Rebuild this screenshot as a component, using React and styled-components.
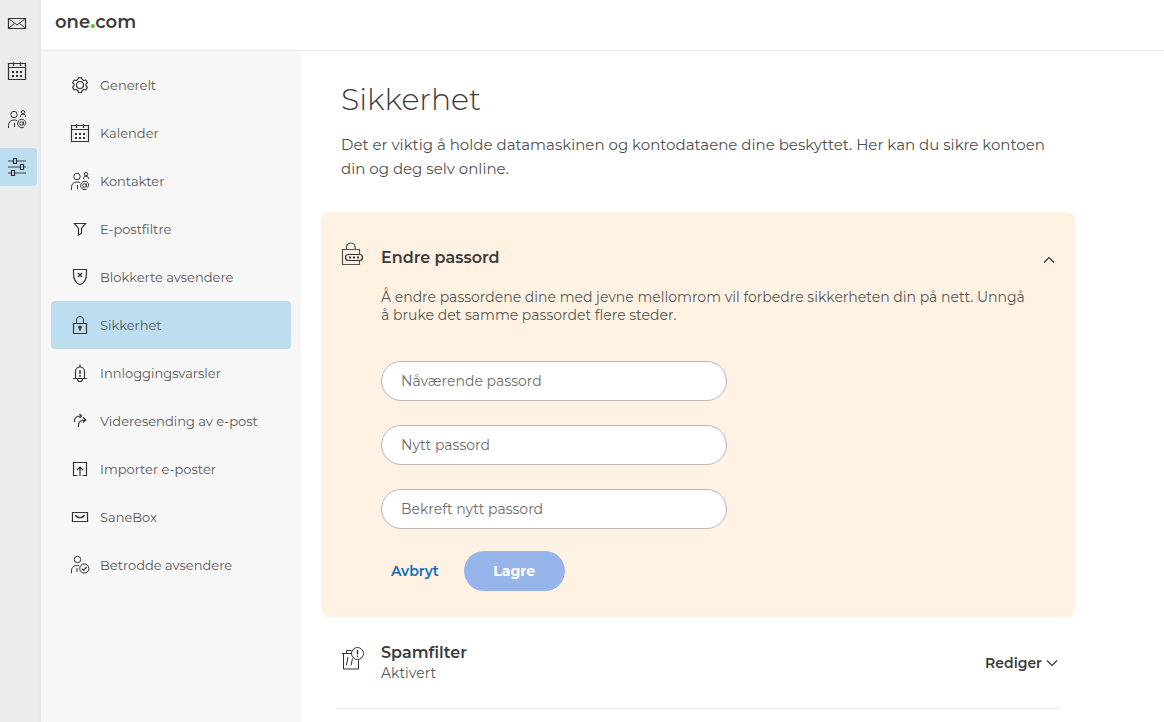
import React from "react";
import styled, { createGlobalStyle } from "styled-components";

const GlobalStyle = createGlobalStyle`
  *, *::before, *::after { box-sizing: border-box; }
  body {
    margin: 0;
    background: #fff;
    color: #3c3c3c;
    font-family: Montserrat, Inter, "Open Sans", sans-serif;
    font-weight: 400;
  }
  h1, h2, p, ul { margin: 0; padding: 0; }
  button, input { font: inherit; color: inherit; }
`;

const Page = styled.div`
  display: flex;
  min-height: 100vh;
`;

const Rail = styled.nav`
  flex: 0 0 41px;
  display: flex;
  flex-direction: column;
  gap: 10px;
  padding: 4px 4px 0 0;
  background: linear-gradient(to right, #ececec 36px, #e8e8e8);
`;

const RailLink = styled.a`
  display: flex;
  align-items: center;
  height: 38px;
  padding-left: 5px;
  border-radius: 0 4px 4px 0;
  color: #333;
  background: ${(p) => (p.$active ? "#bdddf1" : "transparent")};
`;

const Column = styled.div`
  flex: 1;
  min-width: 0;
  display: flex;
  flex-direction: column;
`;

const Header = styled.header`
  height: 51px;
  padding: 10px 14px;
  border-bottom: 1px solid #e9e9e9;
`;

const Logo = styled.a`
  color: #3c3c3c;
  font-size: 18px;
  line-height: 24px;
  font-weight: 600;
  text-decoration: none;
`;

const LogoDot = styled.span`
  color: #76b82a;
  font-weight: 800;
`;

const Body = styled.div`
  flex: 1;
  display: flex;
`;

const Sidebar = styled.nav`
  flex: 0 0 260px;
  padding: 10px;
  background: #f7f7f7;
`;

const NavList = styled.ul`
  list-style: none;
`;

const NavLink = styled.a`
  display: flex;
  align-items: center;
  gap: 8px;
  height: 48px;
  padding-left: 17px;
  border-radius: 4px;
  color: #585858;
  font-size: 13px;
  text-decoration: none;
  background: ${(p) => (p.$active ? "#bdddf1" : "transparent")};
`;

const Main = styled.main`
  flex: 1;
  min-width: 0;
  padding: 29px 20px 0;
`;

const Content = styled.div`
  max-width: 754px;
`;

const Intro = styled.header`
  padding: 0 20px 31px;
`;

const Title = styled.h1`
  margin-bottom: 13px;
  font-size: 30px;
  line-height: 40px;
  font-weight: 300;
`;

const Lead = styled.p`
  color: #505050;
  font-size: 15px;
  line-height: 24px;
`;

const Card = styled.section`
  display: grid;
  grid-template-columns: 24px 1fr 12px;
  column-gap: 16px;
  padding: 30px 20px 26px;
  border-radius: 8px;
  background: #fff2e3;
`;

const CardTitle = styled.h2`
  font-size: 16px;
  line-height: 20px;
  font-weight: 600;
`;

const CardHead = styled.div`
  padding-top: 6px;
`;

const IconButton = styled.button`
  display: flex;
  align-items: center;
  justify-content: center;
  height: 36px;
  padding: 0;
  border: 0;
  background: none;
  cursor: pointer;
`;

const CardBody = styled.div`
  grid-column: 2 / 4;
  padding-top: 10px;
`;

const CardText = styled.p`
  max-width: 652px;
  margin-bottom: 37px;
  color: #585858;
  font-size: 14px;
  line-height: 18px;
`;

const Form = styled.form`
  display: flex;
  flex-direction: column;
  align-items: flex-start;
  gap: 24px;
`;

const Field = styled.input`
  width: 100%;
  max-width: 346px;
  height: 40px;
  padding: 0 19px;
  border: 1px solid #b9b9b9;
  border-radius: 20px;
  background: #fff;
  font-size: 14px;
  &::placeholder {
    color: #6e6e6e;
    opacity: 1;
  }
`;

const Actions = styled.div`
  display: flex;
  gap: 15px;
  margin-top: -2px;
`;

const TextButton = styled.button`
  height: 40px;
  padding: 0 10px;
  border: 0;
  background: none;
  color: #0f6cc0;
  font-size: 14px;
  font-weight: 600;
`;

const PrimaryButton = styled.button`
  min-width: 101px;
  height: 40px;
  padding: 0 28px;
  border: 0;
  border-radius: 20px;
  background: #97b5ea;
  color: #fff;
  font-size: 14px;
  font-weight: 700;
`;

const Row = styled.section`
  display: flex;
  gap: 16px;
  margin: 0 15px;
  padding: 26px 2px 24px 5px;
  border-bottom: 1px solid #e9e9e9;
`;

const RowIcon = styled.div`
  padding-top: 4px;
`;

const RowText = styled.div`
  flex: 1;
`;

const RowStatus = styled.p`
  color: #585858;
  font-size: 14px;
  line-height: 21px;
`;

const EditButton = styled.button`
  display: flex;
  align-items: center;
  gap: 4px;
  height: 40px;
  padding: 0;
  border: 0;
  background: none;
  font-size: 14px;
  font-weight: 600;
  cursor: pointer;
`;

const Glyph = styled.svg`
  display: block;
  flex: none;
  fill: none;
  stroke: #333;
  stroke-width: ${(p) => (p.$fine ? 1 : 1.2)};
`;

const Icon = ({ size = 24, fine, children }) => (
  <Glyph width={size} height={size} viewBox={`0 0 ${size} ${size}`} $fine={fine} aria-hidden="true">
    {children}
  </Glyph>
);

const MailIcon = () => (
  <Icon>
    <path d="M3.5 7.5h17v10h-17z" />
    <path d="M3.5 7.5l8.5 6.5 8.5-6.5M3.5 17.5l6-5.2M20.5 17.5l-6-5.2" strokeWidth="1" />
  </Icon>
);

const CalendarIcon = () => (
  <Icon>
    <path d="M3.5 4.5h17v16h-17zM3.5 8.5h17M8.5 3v4M15.5 3v4" />
    <path d="M7 13h2M11 13h2M15 13h2M7 17h2M11 17h2M15 17h2" strokeWidth="2" />
  </Icon>
);

const ContactsIcon = () => (
  <Icon fine>
    <circle cx="9" cy="7.5" r="3.2" />
    <path d="M3.5 21v-2.500c0-3.600 2.200-5.500 5.500-5.500 1.200 0 2.200.2 3 .7M9.500 16v4" />
    <circle cx="18" cy="5.200" r="1.700" />
    <path d="M15.500 10c0-1.900.8-2.900 2.500-2.900s2.500 1 2.500 2.900" />
    <circle cx="16.500" cy="16.500" r="1.800" />
    <path d="M18.300 14.500v2.500c0 1.600 2.400 1.500 2.400-.6 0-2.400-1.700-4.100-4.100-4.100a4.200 4.200 0 1 0 2.200 7.900" />
  </Icon>
);

const SlidersIcon = () => (
  <Icon>
    <path d="M3 6h5M12 6h9M3 12h12M19 12h2M3 18h3M10 18h11" stroke="#7b909d" strokeWidth="2" />
    <path d="M8.500 3.500h3v5h-3zM15.500 9.500h3v5h-3zM6.500 15.500h3v5h-3z" />
  </Icon>
);

const GearIcon = () => (
  <Icon>
    <circle cx="12" cy="12" r="3.500" />
    <path
      d="M10.500 4.500h3l.7 2.100 1.500.9 2.200-.5 1.500 2.700-1.400 1.500v1.600l1.400 1.500-1.500 2.700-2.200-.5-1.500.9-.7 2.100h-3l-.7-2.100-1.500-.9-2.200.5-1.500-2.700 1.400-1.500v-1.600l-1.400-1.500 1.500-2.700 2.200.5 1.500-.9z"
      strokeLinejoin="round"
    />
  </Icon>
);

const FilterIcon = () => (
  <Icon>
    <path d="M6.500 6.500h11l-4 5v5l-3 1.500v-6.500z" />
  </Icon>
);

const ShieldIcon = () => (
  <Icon>
    <path d="M5.500 4.500h13v3.500c0 6-2.500 10.300-6.500 11.500-4-1.200-6.500-5.500-6.500-11.500z" />
    <path d="M10 8l4 4M14 8l-4 4" strokeWidth="1.400" />
  </Icon>
);

const LockIcon = () => (
  <Icon>
    <path d="M5.500 10.500h13v10h-13z" />
    <path d="M8.500 10.500v-3.500a3.500 3.500 0 0 1 7 0v3.500" strokeWidth="1" />
    <circle cx="12" cy="14.300" r="1.200" fill="#333" />
    <path d="M12 15v3" strokeWidth="1.500" />
  </Icon>
);

const BellIcon = () => (
  <Icon>
    <path d="M5 17.500h14M7.500 17v-6.500a4.500 4.500 0 0 1 9 0v6.500M12 5.500v-2M9.500 18a2.500 2.500 0 0 0 5 0" />
    <path d="M12 9v4M12 14v2" strokeWidth="1.400" />
  </Icon>
);

const ForwardIcon = () => (
  <Icon>
    <path d="M6.500 13v-1c0-3 2-5 6-5M11.500 5l2 2-2 2M10.500 18v-2c0-3 2-5 7-5M14.800 8.500l3 2.500-3 2.500" />
  </Icon>
);

const ImportIcon = () => (
  <Icon>
    <path d="M9.500 18.500h-4v-13h13v13h-4M12 19v-8.500M9 13l3-3 3 3" />
  </Icon>
);

const SaneBoxIcon = () => (
  <Icon>
    <path d="M4.500 7.500h15v9h-15z" />
    <path d="M7.500 10c1 3.500 8 3.500 9 0" strokeWidth="1.400" />
  </Icon>
);

const TrustedIcon = () => (
  <Icon fine>
    <circle cx="9.500" cy="6.500" r="3.200" />
    <path d="M3.500 20v-2c0-3.500 2-5.500 6-5.500l1.500.2M9 15v4" />
    <circle cx="16.300" cy="15.500" r="4.600" />
    <path d="M14 15.600l1.700 1.700 3-3.500" strokeWidth="1.200" />
  </Icon>
);

const PasswordIcon = () => (
  <Icon>
    <path d="M18.500 12v-4.500h-17v15h17v-3.500M5.500 7.500v-2.200a4.300 4.300 0 0 1 8.600 0v2.200" stroke="#555" />
    <rect x="4.500" y="12.500" width="17" height="6" rx="3" />
    <path d="M8 15.500h2M12 15.500h2M16 15.500h2" strokeWidth="2" />
  </Icon>
);

const SpamIcon = () => (
  <Icon fine>
    <path d="M1 6.500h10M2.500 6.500v15.500h15v-9M5.500 6.500v-3h5M7 10l-1.500 8M11.500 11.500l-1.500 7" />
    <circle cx="16.500" cy="6.500" r="6" />
    <path d="M16.500 3v4.500M16.500 8.500v1.500" strokeWidth="1.300" />
  </Icon>
);

const ChevronUp = () => (
  <Icon size={12}>
    <path d="M1 8.500l5-5 5 5" />
  </Icon>
);

const ChevronDown = () => (
  <Icon size={12}>
    <path d="M1 3.500l5 5 5-5" />
  </Icon>
);

const apps = [
  { label: "E-post", icon: MailIcon },
  { label: "Kalender", icon: CalendarIcon },
  { label: "Kontakter", icon: ContactsIcon },
  { label: "Innstillinger", icon: SlidersIcon, active: true },
];

const sections = [
  { label: "Generelt", icon: GearIcon },
  { label: "Kalender", icon: CalendarIcon },
  { label: "Kontakter", icon: ContactsIcon },
  { label: "E-postfiltre", icon: FilterIcon },
  { label: "Blokkerte avsendere", icon: ShieldIcon },
  { label: "Sikkerhet", icon: LockIcon, active: true },
  { label: "Innloggingsvarsler", icon: BellIcon },
  { label: "Videresending av e-post", icon: ForwardIcon },
  { label: "Importer e-poster", icon: ImportIcon },
  { label: "SaneBox", icon: SaneBoxIcon },
  { label: "Betrodde avsendere", icon: TrustedIcon },
];

const fields = ["Nåværende passord", "Nytt passord", "Bekreft nytt passord"];

export default function App() {
  return (
    <>
      <GlobalStyle />
      <Page>
        <Rail>
          {apps.map(({ label, icon: AppIcon, active }) => (
            <RailLink key={label} href="#" aria-label={label} $active={active}>
              <AppIcon />
            </RailLink>
          ))}
        </Rail>
        <Column>
          <Header>
            <Logo href="#">
              one<LogoDot>.</LogoDot>com
            </Logo>
          </Header>
          <Body>
            <Sidebar>
              <NavList>
                {sections.map(({ label, icon: SectionIcon, active }) => (
                  <li key={label}>
                    <NavLink href="#" $active={active} aria-current={active ? "page" : undefined}>
                      <SectionIcon />
                      {label}
                    </NavLink>
                  </li>
                ))}
              </NavList>
            </Sidebar>
            <Main>
              <Content>
                <Intro>
                  <Title>Sikkerhet</Title>
                  <Lead>
                    Det er viktig å holde datamaskinen og kontodataene dine beskyttet. Her kan du
                    sikre kontoen din og deg selv online.
                  </Lead>
                </Intro>
                <Card>
                  <PasswordIcon />
                  <CardHead>
                    <CardTitle>Endre passord</CardTitle>
                  </CardHead>
                  <IconButton type="button" aria-label="Lukk">
                    <ChevronUp />
                  </IconButton>
                  <CardBody>
                    <CardText>
                      Å endre passordene dine med jevne mellomrom vil forbedre sikkerheten din på
                      nett. Unngå å bruke det samme passordet flere steder.
                    </CardText>
                    <Form onSubmit={(e) => e.preventDefault()}>
                      {fields.map((label) => (
                        <Field key={label} type="password" placeholder={label} aria-label={label} />
                      ))}
                      <Actions>
                        <TextButton type="button">Avbryt</TextButton>
                        <PrimaryButton type="submit">Lagre</PrimaryButton>
                      </Actions>
                    </Form>
                  </CardBody>
                </Card>
                <Row>
                  <RowIcon>
                    <SpamIcon />
                  </RowIcon>
                  <RowText>
                    <CardTitle>Spamfilter</CardTitle>
                    <RowStatus>Aktivert</RowStatus>
                  </RowText>
                  <EditButton type="button">
                    Rediger
                    <ChevronDown />
                  </EditButton>
                </Row>
              </Content>
            </Main>
          </Body>
        </Column>
      </Page>
    </>
  );
}
